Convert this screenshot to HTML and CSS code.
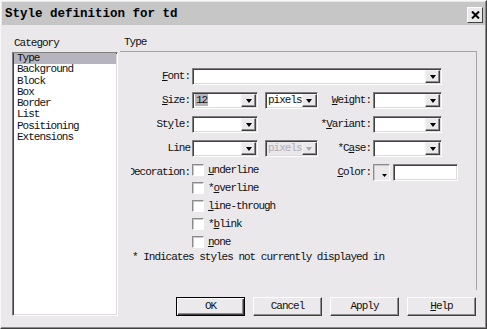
FILE: index.html
```html
<!DOCTYPE html>
<html lang="en">
  <head>
    <meta charset="UTF-8" />
    <title>Style definition for td</title>
    <link rel="stylesheet" href="styles.css">
  </head>
  <body>
    <div class="dialog">
      <div class="titlebar">
        <span class="title">Style definition for td</span>
        <span class="close-btn">
          <svg width="9" height="8" viewBox="0 0 9 8"><path d="M1 0.5 L8 7.5 M8 0.5 L1 7.5" stroke="#000" stroke-width="2" fill="none"/></svg>
        </span>
      </div>

      <div class="main">
        <div class="category">
          <div class="caption">Category</div>
          <ul class="cat-list">
            <li class="selected">Type</li>
            <li>Background</li>
            <li>Block</li>
            <li>Box</li>
            <li>Border</li>
            <li>List</li>
            <li>Positioning</li>
            <li>Extensions</li>
          </ul>
        </div>

        <div class="panel">
          <div class="panel-head">Type</div>
          <div class="panel-body">
            <div class="form">
              <!-- Font -->
              <div class="lbl c1"><span><u>F</u>ont:</span></div>
              <div class="combo wide"><span class="value"></span><span class="arrow"></span></div>

              <!-- Size / Weight -->
              <div class="lbl c1"><span><u>S</u>ize:</span></div>
              <div class="combo c2"><span class="value"><span class="sel">12</span></span><span class="arrow"></span></div>
              <div class="combo c4 units"><span class="value">pixels</span><span class="arrow"></span></div>
              <div class="lbl c5"><span><u>W</u>eight:</span></div>
              <div class="combo c6"><span class="value"></span><span class="arrow"></span></div>

              <!-- Style / Variant -->
              <div class="lbl c1"><span>St<u>y</u>le:</span></div>
              <div class="combo c2"><span class="value"></span><span class="arrow"></span></div>
              <div class="lbl c5"><span>*<u>V</u>ariant:</span></div>
              <div class="combo c6"><span class="value"></span><span class="arrow"></span></div>

              <!-- Line / Case -->
              <div class="lbl c1"><span>Line</span></div>
              <div class="combo c2"><span class="value"></span><span class="arrow"></span></div>
              <div class="combo c4 units disabled"><span class="value">pixels</span><span class="arrow"></span></div>
              <div class="lbl c5"><span>*C<u>a</u>se:</span></div>
              <div class="combo c6"><span class="value"></span><span class="arrow"></span></div>

              <!-- Decoration / Color -->
              <div class="lbl c1 top"><span>Decoration:</span></div>
              <div class="checks">
                <div class="check"><span class="box"></span><span><u>u</u>nderline</span></div>
                <div class="check"><span class="box"></span><span>*<u>o</u>verline</span></div>
                <div class="check"><span class="box"></span><span><u>l</u>ine-through</span></div>
                <div class="check"><span class="box"></span><span>*<u>b</u>link</span></div>
                <div class="check"><span class="box"></span><span><u>n</u>one</span></div>
              </div>
              <div class="lbl c5 top"><span><u>C</u>olor:</span></div>
              <div class="color c6">
                <span class="swatch"><svg width="5" height="3" viewBox="0 0 5 3"><path d="M0 0 H5 L2.5 3 Z" fill="#000"/></svg></span>
                <span class="text-input"></span>
              </div>

              <div class="note">* Indicates styles not currently displayed in</div>
            </div>
          </div>

          <div class="buttons">
            <div class="btn default">OK</div>
            <div class="btn">Cancel</div>
            <div class="btn">Apply</div>
            <div class="btn"><u>H</u>elp</div>
          </div>
        </div>
      </div>
    </div>
  </body>
</html>
```

FILE: styles.css
```css
body {
  margin: 0;
  background: #ebe8ec;
  font-family: "Liberation Mono", "DejaVu Sans Mono", monospace;
  font-size: 11px;
  letter-spacing: -1px;
  color: #111;
}

u {
  text-decoration: underline;
}

.dialog {
  box-sizing: border-box;
  width: 487px;
  height: 329px;
  display: flex;
  flex-direction: column;
  border-top: 1px solid #f8f8f8;
  border-left: 1px solid #f8f8f8;
  border-right: 1px solid #404040;
  border-bottom: 1px solid #404040;
  box-shadow: inset -1px -1px #8c8c8c;
}

/* title bar */
.titlebar {
  height: 23px;
  margin: 1px 1px 0 1px;
  padding: 0 2px 0 3px;
  background: #c6c6c6;
  display: flex;
  align-items: center;
  justify-content: space-between;
}

.title {
  font-weight: bold;
  font-size: 12.5px;
  letter-spacing: 0;
  color: #000;
}

.close-btn {
  box-sizing: border-box;
  width: 16px;
  height: 16px;
  margin-top: 3px;
  background: #ece9ec;
  border: 1px solid;
  border-color: #fff #404040 #404040 #fff;
  display: flex;
  align-items: center;
  justify-content: center;
}

/* main area */
.main {
  flex: 1;
  display: flex;
  gap: 2px;
  padding: 9px 9px 12px 11px;
}

.category {
  width: 106px;
  display: flex;
  flex-direction: column;
}

.caption {
  line-height: 18px;
  padding-left: 2px;
}

.cat-list {
  box-sizing: border-box;
  height: 264px;
  margin: 0;
  padding: 0 1px;
  list-style: none;
  background: #fff;
  border: 1px solid;
  border-color: #808080 #fff #fff #808080;
  box-shadow: inset 1px 1px #404040, inset -1px -1px #dcdcdc;
}

.cat-list li {
  line-height: 11.3px;
  padding-left: 3px;
}

.cat-list li.selected {
  background: #b6b4be;
}

/* right panel */
.panel {
  flex: 1;
  display: flex;
  flex-direction: column;
}

.panel-head {
  line-height: 17px;
  padding-left: 4px;
  border-bottom: 1px solid #a4a4a4;
}

.panel-body {
  flex: 1;
  padding: 16px 0 0 11px;
  border-right: 1px solid #a4a4a4;
}

.form {
  display: grid;
  grid-template-columns: 61px 66px 7px 53px 55px 69px;
  grid-auto-rows: auto;
  row-gap: 7px;
}

.c1 { grid-column: 1; }
.c2 { grid-column: 2; }
.c4 { grid-column: 4; }
.c5 { grid-column: 5; }
.c6 { grid-column: 6; }
.wide { grid-column: 2 / 7; }

.lbl {
  box-sizing: border-box;
  height: 17px;
  line-height: 17px;
  padding-right: 2px;
  display: flex;
  justify-content: flex-end;
  overflow: hidden;
  white-space: nowrap;
}

.lbl.top {
  align-self: start;
}

/* combo boxes */
.combo {
  box-sizing: border-box;
  height: 17px;
  padding: 1px;
  display: flex;
  background: #fff;
  border: 1px solid;
  border-color: #808080 #fff #fff #808080;
  box-shadow: inset 1px 1px #404040, inset -1px -1px #dcdcdc;
}

.combo .value {
  flex: 1;
  padding-left: 1px;
  line-height: 13px;
  white-space: nowrap;
  overflow: hidden;
}

.combo.units .value {
  padding-left: 1px;
  overflow: visible;
}

.combo .sel {
  background: #b6b4be;
  padding: 0 1px;
}

.combo .arrow {
  box-sizing: border-box;
  flex: none;
  width: 15px;
  background: #ece9ec;
  border: 1px solid;
  border-color: #f4f4f4 #404040 #404040 #f4f4f4;
  box-shadow: inset -1px -1px #8c8c8c;
  display: flex;
  align-items: center;
  justify-content: center;
}

.combo .arrow::after {
  content: "";
  border-left: 3.5px solid transparent;
  border-right: 3.5px solid transparent;
  border-top: 4px solid #000;
  margin-top: 1px;
}

.combo.disabled {
  background: #ebe8ec;
  color: #b0aeb4;
}

.combo.disabled .arrow::after {
  border-top-color: #a8a8a8;
}

/* decoration checkboxes */
.checks {
  grid-column: 2 / 5;
  display: flex;
  flex-direction: column;
  gap: 6px;
}

.check {
  height: 12px;
  line-height: 12px;
  display: flex;
  align-items: center;
  gap: 4px;
  white-space: nowrap;
}

.check .box {
  box-sizing: border-box;
  width: 12px;
  height: 12px;
  background: #fff;
  border: 1px solid;
  border-color: #8c8c8c #fff #fff #8c8c8c;
  box-shadow: inset 1px 1px #c8c8c8;
}

/* colour picker */
.color {
  align-self: start;
  display: flex;
  gap: 3px;
}

.swatch {
  box-sizing: border-box;
  flex: none;
  width: 17px;
  height: 17px;
  padding: 0 2px 3px 0;
  background: #ece9ec;
  border: 1px solid;
  border-color: #8c8c8c #fff #fff #8c8c8c;
  box-shadow: inset 1px 1px #c8c8c8;
  display: flex;
  align-items: flex-end;
  justify-content: flex-end;
}

.text-input {
  box-sizing: border-box;
  flex: none;
  width: 65px;
  height: 17px;
  background: #fff;
  border: 1px solid;
  border-color: #808080 #fff #fff #808080;
  box-shadow: inset 1px 1px #404040, inset -1px -1px #dcdcdc;
}

.note {
  grid-column: 1 / -1;
  margin-top: -4px;
  padding-left: 1px;
  line-height: 12px;
  white-space: nowrap;
}

/* buttons */
.buttons {
  display: flex;
  justify-content: flex-end;
  gap: 8px;
  padding: 7px 1px 0 0;
}

.btn {
  box-sizing: border-box;
  width: 69px;
  height: 19px;
  line-height: 17px;
  text-align: center;
  background: #ece9ec;
  border: 1px solid;
  border-color: #fff #404040 #404040 #fff;
  box-shadow: inset -1px -1px #8c8c8c;
}

.btn.default {
  border-color: #000;
  box-shadow: inset 1px 1px #fff, inset -1px -1px #404040, inset -2px -2px #8c8c8c;
}
```
